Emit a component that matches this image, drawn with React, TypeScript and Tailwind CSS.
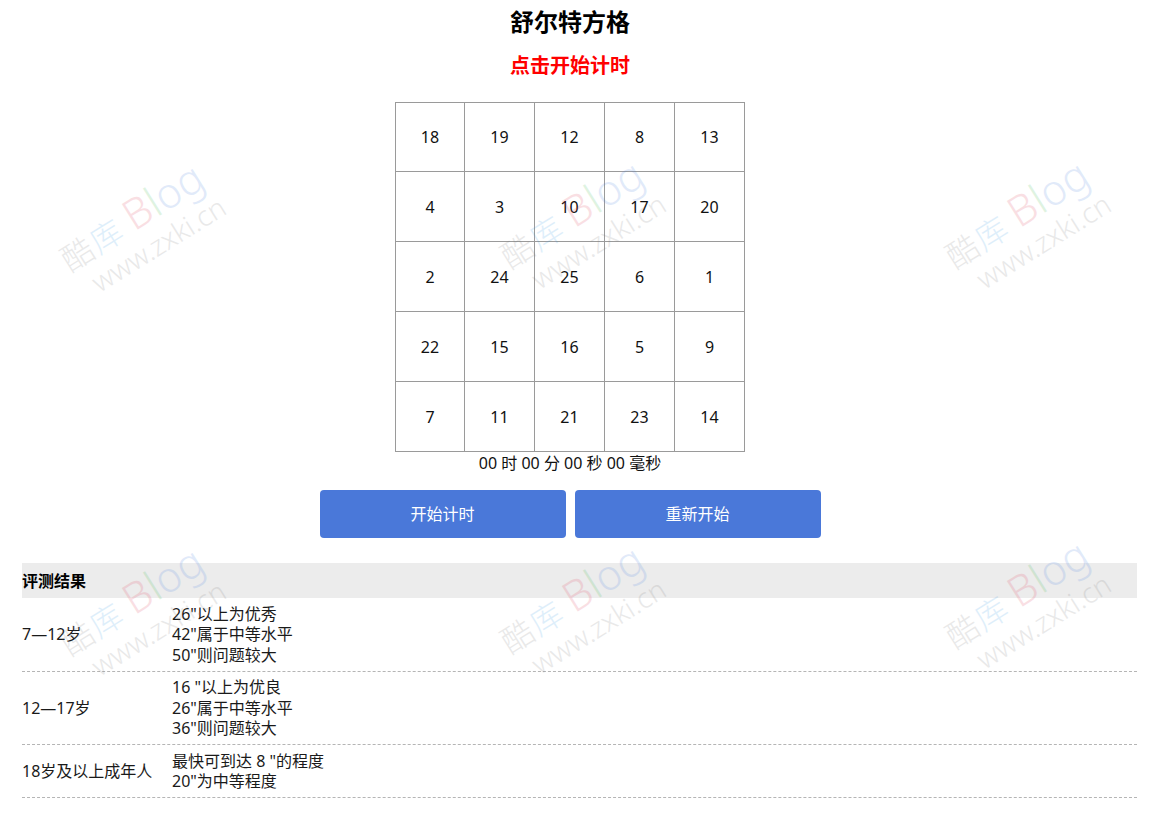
import React from "react";

const grid = [
  [18, 19, 12, 8, 13],
  [4, 3, 10, 17, 20],
  [2, 24, 25, 6, 1],
  [22, 15, 16, 5, 9],
  [7, 11, 21, 23, 14],
];

const rows: { age: string; lines: string[] }[] = [
  { age: "7—12岁", lines: ['26"以上为优秀', '42"属于中等水平', '50"则问题较大'] },
  { age: "12—17岁", lines: ['16 "以上为优良', '26"属于中等水平', '36"则问题较大'] },
  { age: "18岁及以上成年人", lines: ['最快可到达 8 "的程度', '20"为中等程度'] },
];

function Watermark({ pos }: { pos: string }) {
  return (
    <div
      className={`pointer-events-none absolute ${pos} -translate-x-1/2 -translate-y-1/2 -rotate-[32deg] select-none opacity-[0.16]`}
      style={{ fontFamily: '"Noto Sans", "Noto Sans CJK SC", sans-serif' }}
    >
      <div className="flex items-end whitespace-nowrap leading-none">
        <span className="text-[32px] font-light text-[#7a7a7a]">酷</span>
        <span className="ml-[2px] text-[32px] font-light text-[#3a9be6]">库</span>
        <span className="ml-[10px] text-[42px] font-light text-[#e0405a]">B</span>
        <span className="text-[42px] font-light text-[#3cb84a]">l</span>
        <span className="text-[42px] font-light text-[#4a7fe0]">og</span>
      </div>
      <div className="ml-[14px] mt-[4px] whitespace-nowrap text-[28px] font-light leading-none text-[#7a7a7a]">
        www.zxki.cn
      </div>
    </div>
  );
}

export default function App() {
  return (
    <div
      className="relative min-h-[814px] w-full overflow-hidden bg-white text-[#1a1a1a]"
      style={{ fontFamily: '"Noto Sans", "Noto Sans CJK SC", sans-serif' }}
    >
      <div className="flex w-[1140px] flex-col items-center pt-[6px]">
        <h1 className="text-[24px] font-bold leading-[32px] text-black">舒尔特方格</h1>
        <h2 className="mt-[14px] text-[20px] font-bold leading-[28px] text-[#ff0000]">点击开始计时</h2>
        <div className="mt-[22px] grid grid-cols-[69px_repeat(4,70px)] border-l border-t border-[#9a9a9a]">
          {grid.flat().map((n, i) => (
            <div
              key={i}
              className={`flex ${i < 5 ? "h-[69px]" : "h-[70px]"} items-center justify-center border-b border-r border-[#9a9a9a] text-[16px] text-[#111]`}
            >
              {n}
            </div>
          ))}
        </div>
        <div className="text-[16px] leading-[23px] text-[#111]">00 时 00 分 00 秒 00 毫秒</div>
        <div className="mt-[15px] flex gap-[9px]">
          <button className="h-[48px] w-[246px] rounded-[4px] bg-[#4a78d9] text-[16px] text-white">开始计时</button>
          <button className="h-[48px] w-[246px] rounded-[4px] bg-[#4a78d9] text-[16px] text-white">重新开始</button>
        </div>
      </div>

      <div className="mx-[22px] mt-[25px] mr-[21px]">
        <div className="flex h-[35px] items-center bg-[#ececec] text-[16px] font-bold text-black">评测结果</div>
        {rows.map((r) => (
          <div key={r.age} className="flex items-center border-b border-dashed border-[#b5b5b5] py-[5.5px] text-[16px] text-[#1a1a1a]">
            <div className="w-[150px] leading-[20.5px]">{r.age}</div>
            <div className="leading-[20.5px]">
              {r.lines.map((l) => (
                <div key={l}>{l}</div>
              ))}
            </div>
          </div>
        ))}
      </div>

      <Watermark pos="left-[140px] top-[228px]" />
      <Watermark pos="left-[580px] top-[225px]" />
      <Watermark pos="left-[1025px] top-[225px]" />
      <Watermark pos="left-[140px] top-[612px]" />
      <Watermark pos="left-[580px] top-[610px]" />
      <Watermark pos="left-[1025px] top-[605px]" />
    </div>
  );
}
